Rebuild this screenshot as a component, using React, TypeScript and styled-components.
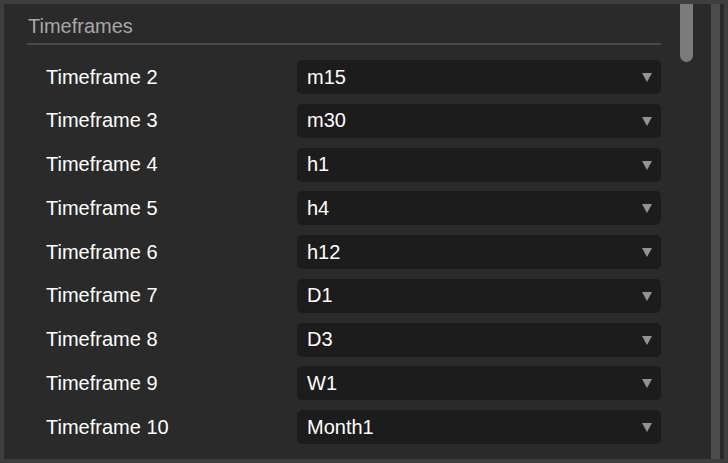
import React from "react";
import styled, { createGlobalStyle } from "styled-components";

const Global = createGlobalStyle`
  html, body { margin: 0; padding: 0; background: #2a2a2a; }
  body { font-family: "Liberation Sans", Arial, sans-serif; }
`;

const Frame = styled.div`
  width: 728px;
  height: 463px;
  box-sizing: border-box;
  border: 4px solid #3e3e3e;
  background: #2a2a2a;
  display: flex;
  overflow: hidden;
`;

const Content = styled.div`
  flex: 1;
  padding: 10px 0 0 23px;
  min-width: 0;
`;

const Section = styled.div`
  width: 634px;
`;

const Title = styled.div`
  font-size: 20px;
  line-height: 24px;
  color: #a7a7a7;
  padding-left: 1px;
  padding-bottom: 5px;
  border-bottom: 2px solid #4a4a4a;
`;

const Rows = styled.div`
  padding: 15px 0 0 19px;
  display: flex;
  flex-direction: column;
  gap: 9.75px;
`;

const Row = styled.div`
  display: grid;
  grid-template-columns: 251px 1fr;
  align-items: center;
  height: 34px;
`;

const Label = styled.span`
  font-size: 20px;
  color: #ffffff;
`;

const Select = styled.div`
  height: 34px;
  background: #1c1c1c;
  border-radius: 5px;
  display: flex;
  align-items: center;
  justify-content: space-between;
  padding: 0 9px 0 10px;
  font-size: 20px;
  color: #ffffff;
`;

const Arrow = styled.span`
  width: 0;
  height: 0;
  border-left: 5px solid transparent;
  border-right: 5px solid transparent;
  border-top: 9px solid #939393;
  margin-top: 1px;
`;

const Track = styled.div`
  width: 13px;
  margin-right: 18px;
`;

const Thumb = styled.div`
  height: 58px;
  background: #7b7b7b;
  border-radius: 0 0 7px 7px;
`;

const OuterBar = styled.div`
  width: 9px;
  background: #4c4c4c;
  margin-right: 4px;
`;

const rows = [
  ["Timeframe 2", "m15"],
  ["Timeframe 3", "m30"],
  ["Timeframe 4", "h1"],
  ["Timeframe 5", "h4"],
  ["Timeframe 6", "h12"],
  ["Timeframe 7", "D1"],
  ["Timeframe 8", "D3"],
  ["Timeframe 9", "W1"],
  ["Timeframe 10", "Month1"],
];

export default function App() {
  return (
    <>
      <Global />
      <Frame>
        <Content>
          <Section>
            <Title>Timeframes</Title>
            <Rows>
              {rows.map(([label, value]) => (
                <Row key={label}>
                  <Label>{label}</Label>
                  <Select>
                    {value}
                    <Arrow />
                  </Select>
                </Row>
              ))}
            </Rows>
          </Section>
        </Content>
        <Track>
          <Thumb />
        </Track>
        <OuterBar />
      </Frame>
    </>
  );
}
